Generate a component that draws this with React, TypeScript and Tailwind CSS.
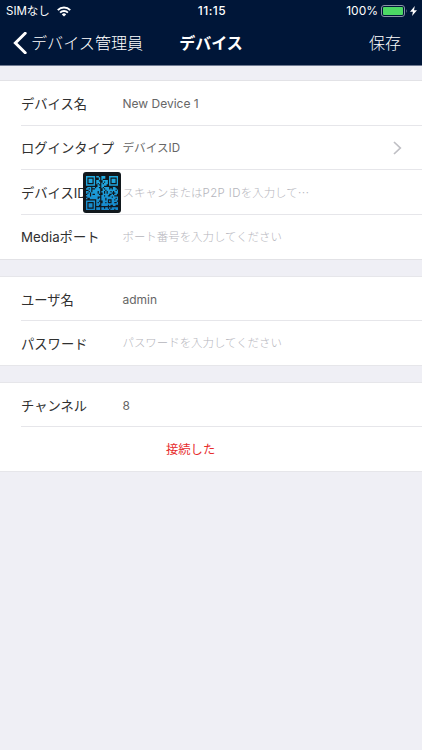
import type { ReactNode } from "react";

interface FieldProps {
  label: string;
  value?: ReactNode;
  placeholder?: ReactNode;
  last?: boolean;
  children?: ReactNode;
}

const QR_SIZE = 25;

// Finder squares in three corners, an alignment square, fixed noise elsewhere
function isModuleOn(x: number, y: number) {
  const corners = [
    [0, 0],
    [QR_SIZE - 7, 0],
    [0, QR_SIZE - 7],
  ];
  for (const [cx, cy] of corners) {
    const dx = x - cx;
    const dy = y - cy;
    if (dx >= -1 && dx <= 7 && dy >= -1 && dy <= 7) {
      const ring = Math.max(Math.abs(dx - 3), Math.abs(dy - 3));
      return ring === 3 || ring <= 1;
    }
  }
  const align = Math.max(Math.abs(x - 18), Math.abs(y - 18));
  if (align <= 2) return align !== 1;
  return (x * 37 + y * 61 + x * y * 13 + ((x * x * y) % 11) * 7) % 17 < 11;
}

function QrIcon() {
  let d = "";
  for (let y = 0; y < QR_SIZE; y++) {
    for (let x = 0; x < QR_SIZE; x++) {
      if (isModuleOn(x, y)) d += `M${x} ${y}h1.08v1.08h-1.08z`;
    }
  }
  return (
    <svg viewBox="0 0 25 25" preserveAspectRatio="none" className="h-[34px] w-[32px]">
      <defs>
        <linearGradient id="qr" x1="0" y1="0" x2="0" y2="1">
          <stop offset="0" stopColor="#22aee2" />
          <stop offset="1" stopColor="#1686cb" />
        </linearGradient>
      </defs>
      <path d={d} fill="url(#qr)" />
    </svg>
  );
}

function StatusBar() {
  return (
    <div className="grid h-[22px] grid-cols-3 items-center text-[12px] leading-none">
      <div className="flex items-center gap-[7px] pl-[6px]">
        <span className="whitespace-nowrap pt-[2px] text-[11.5px]">SIMなし</span>
        <svg viewBox="0 0 14 11" className="h-[11px] w-[14px]" fill="none" stroke="currentColor">
          <path d="M.8 4.1a8.8 8.8 0 0 1 12.4 0" strokeWidth="2" />
          <path d="M3.1 6.6a5.5 5.5 0 0 1 7.8 0" strokeWidth="1.9" />
          <path d="M7 10.6 4.8 8.4a3.1 3.1 0 0 1 4.4 0z" fill="currentColor" stroke="none" />
        </svg>
      </div>
      <span className="pl-[2px] text-center font-medium tracking-[0.5px]">11:15</span>
      <div className="flex items-center justify-end pr-[5px]">
        <span>100%</span>
        <svg viewBox="0 0 27 12" className="ml-[3px] h-[12px] w-[27px]">
          <rect x=".5" y=".5" width="23" height="11" rx="2.5" fill="none" stroke="#8793a5" />
          <rect x="2" y="2" width="20" height="8" rx="1" fill="#4cd964" />
          <path d="M25 4q1.3 2 0 4z" fill="#8793a5" />
        </svg>
        <svg viewBox="0 0 7 10" className="ml-[2px] h-[10px] w-[7px]" fill="currentColor">
          <path d="M4.8 0 0 5.7h2.9L2.1 10 7 4.2H4z" />
        </svg>
      </div>
    </div>
  );
}

function NavBar() {
  return (
    <div className="grid h-[42px] grid-cols-[164px_94px_1fr] items-center text-[16px]">
      <button className="flex items-center gap-[4px] pl-[13px]">
        <svg viewBox="0 0 14 22" className="h-[22px] w-[14px]" fill="none" stroke="currentColor" strokeWidth="3">
          <path d="M12.2 1.3 2.4 11l9.8 9.7" strokeLinecap="round" />
        </svg>
        <span className="whitespace-nowrap text-[16.1px] font-light">デバイス管理員</span>
      </button>
      <h1 className="text-center font-bold">デバイス</h1>
      <button className="pr-[21px] text-right font-light">保存</button>
    </div>
  );
}

function Field({ label, value, placeholder, last, children }: FieldProps) {
  return (
    <div className="relative min-h-0 flex-1 pl-[21px]">
      <div
        className={`flex h-full items-center border-b pt-[4px] ${last ? "border-transparent" : "border-[#e6e6ea]"}`}
      >
        <span className="w-[101.5px] shrink-0 whitespace-nowrap text-[13.3px] text-[#303030]">{label}</span>
        {value ? (
          <span className="pb-[2px] text-[12px] text-[#666]">{value}</span>
        ) : (
          <span className="pb-px text-[11.45px] font-light text-[#b5b5bc]">{placeholder}</span>
        )}
      </div>
      {children}
    </div>
  );
}

export default function App() {
  return (
    <div className="flex h-[750px] w-[422px] flex-col bg-[#efeff5] font-['Inter','Noto_Sans_CJK_JP',sans-serif]">
      <header className="h-[66px] border-b border-[#707b92] bg-[#001638] text-white">
        <StatusBar />
        <NavBar />
      </header>

      <section className="mt-[14px] flex h-[180px] flex-col border-y border-[#e2e2e6] bg-white">
        <Field label="デバイス名" value="New Device 1" />
        <Field label="ログインタイプ" value={<span className="text-[11.6px]">デバイスID</span>}>
          <svg
            viewBox="0 0 9 14"
            className="absolute right-[20px] top-[15px] h-[14px] w-[9px]"
            fill="none"
            stroke="#bfbfc4"
            strokeWidth="1.7"
          >
            <path d="m1 1 6.3 6L1 13" />
          </svg>
        </Field>
        <Field
          label="デバイスID"
          placeholder={
            <>
              スキャンまたは<span className="tracking-[0.4px]">P2P ID</span>を入力して
              <span className="font-['Noto_Sans_CJK_JP',sans-serif]">…</span>
            </>
          }
        >
          <div className="absolute left-[83px] top-[2px] flex h-[41px] w-[38px] items-center justify-center rounded-[3px] bg-[#11181d]">
            <QrIcon />
          </div>
        </Field>
        <Field label="Mediaポート" placeholder="ポート番号を入力してください" last />
      </section>

      <section className="mt-[16px] flex h-[90px] flex-col border-y border-[#e6e6ea] bg-white">
        <Field label="ユーザ名" value="admin" />
        <Field label="パスワード" placeholder="パスワードを入力してください" last />
      </section>

      <section className="mt-[16px] flex h-[90px] flex-col border-y border-[#e6e6ea] bg-white">
        <Field label="チャンネル" value="8" />
        <div className="flex min-h-0 flex-1 items-center pl-[166px]">
          <span className="pt-[3px] text-[12.3px] text-[#e72e2e]">接続した</span>
        </div>
      </section>
    </div>
  );
}
